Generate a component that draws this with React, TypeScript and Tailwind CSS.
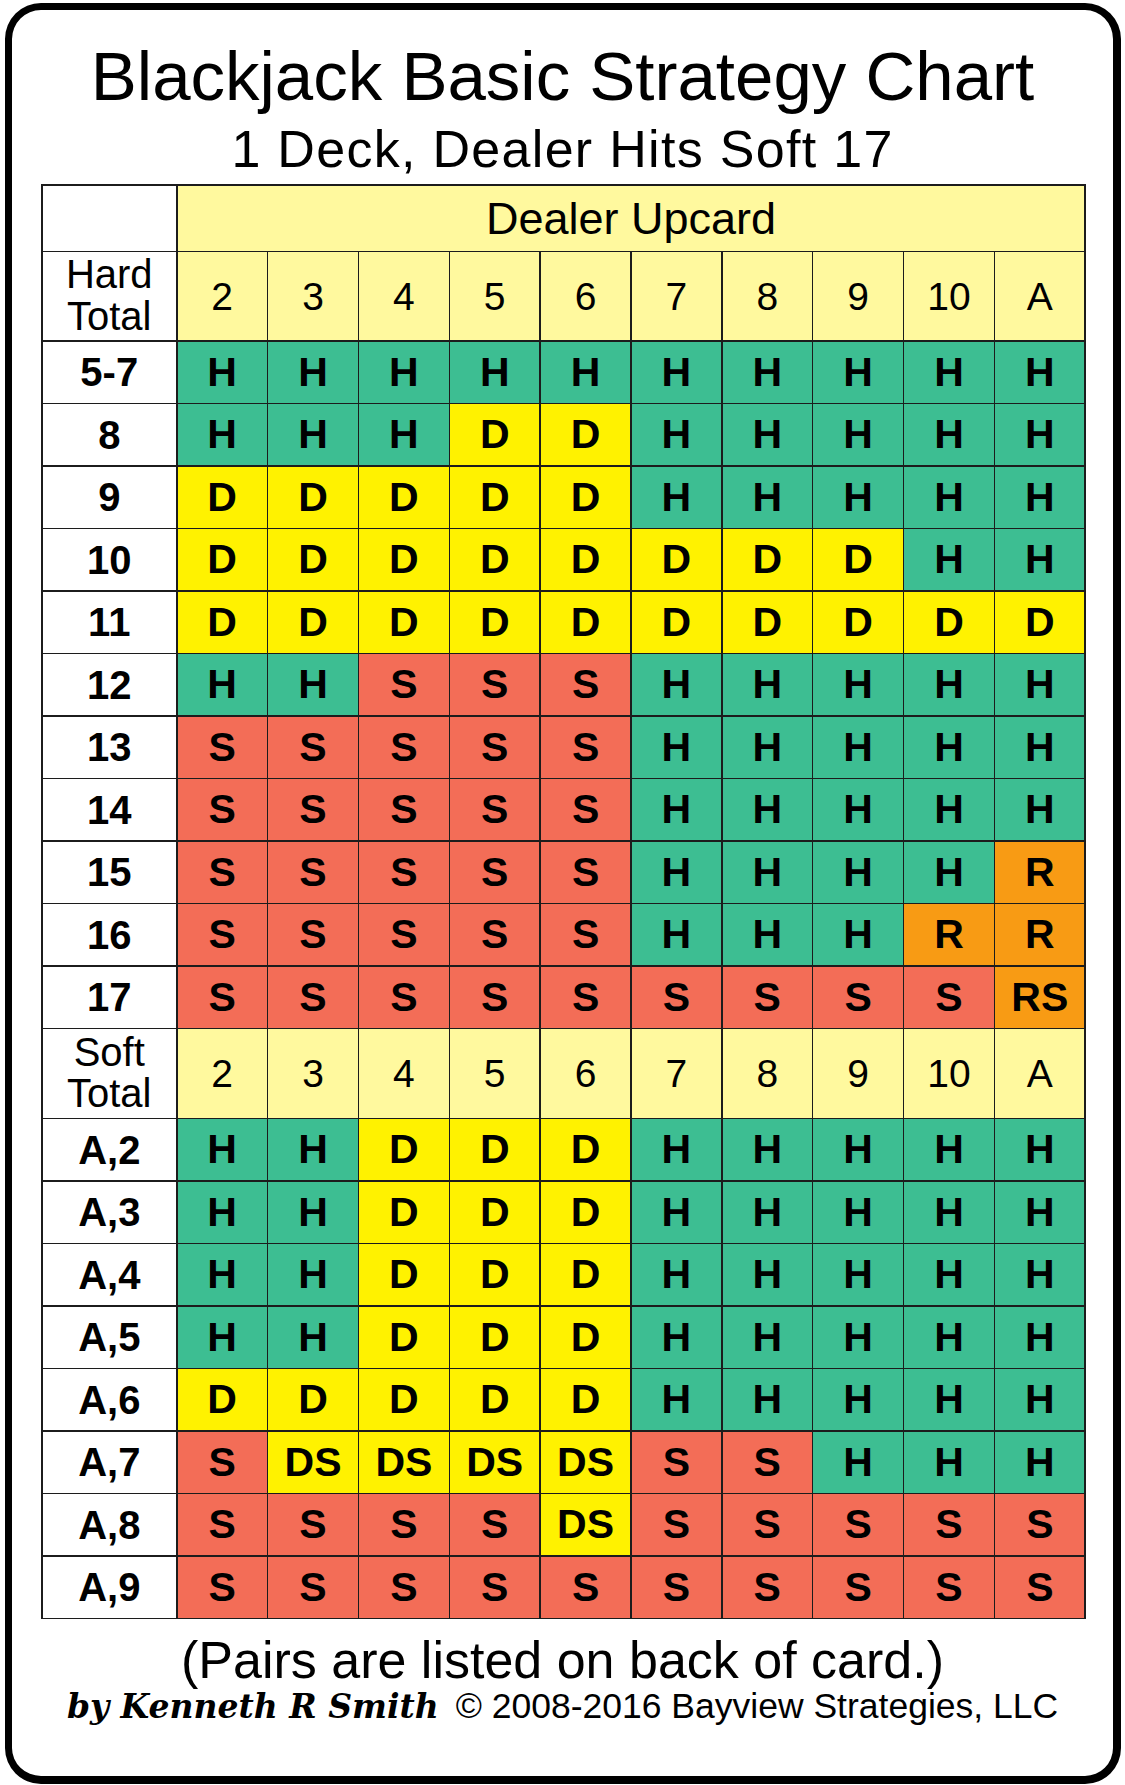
import React from "react";

type Cell = "H" | "D" | "S" | "R" | "DS" | "RS";

const hard: [string, Cell[]][] = [
  ["5-7", ["H", "H", "H", "H", "H", "H", "H", "H", "H", "H"]],
  ["8", ["H", "H", "H", "D", "D", "H", "H", "H", "H", "H"]],
  ["9", ["D", "D", "D", "D", "D", "H", "H", "H", "H", "H"]],
  ["10", ["D", "D", "D", "D", "D", "D", "D", "D", "H", "H"]],
  ["11", ["D", "D", "D", "D", "D", "D", "D", "D", "D", "D"]],
  ["12", ["H", "H", "S", "S", "S", "H", "H", "H", "H", "H"]],
  ["13", ["S", "S", "S", "S", "S", "H", "H", "H", "H", "H"]],
  ["14", ["S", "S", "S", "S", "S", "H", "H", "H", "H", "H"]],
  ["15", ["S", "S", "S", "S", "S", "H", "H", "H", "H", "R"]],
  ["16", ["S", "S", "S", "S", "S", "H", "H", "H", "R", "R"]],
  ["17", ["S", "S", "S", "S", "S", "S", "S", "S", "S", "RS"]],
];

const soft: [string, Cell[]][] = [
  ["A,2", ["H", "H", "D", "D", "D", "H", "H", "H", "H", "H"]],
  ["A,3", ["H", "H", "D", "D", "D", "H", "H", "H", "H", "H"]],
  ["A,4", ["H", "H", "D", "D", "D", "H", "H", "H", "H", "H"]],
  ["A,5", ["H", "H", "D", "D", "D", "H", "H", "H", "H", "H"]],
  ["A,6", ["D", "D", "D", "D", "D", "H", "H", "H", "H", "H"]],
  ["A,7", ["S", "DS", "DS", "DS", "DS", "S", "S", "H", "H", "H"]],
  ["A,8", ["S", "S", "S", "S", "DS", "S", "S", "S", "S", "S"]],
  ["A,9", ["S", "S", "S", "S", "S", "S", "S", "S", "S", "S"]],
];

const upcards = ["2", "3", "4", "5", "6", "7", "8", "9", "10", "A"];

function cellBg(c: Cell): string {
  switch (c) {
    case "H":
      return "bg-[#3dbe92]";
    case "D":
    case "DS":
      return "bg-[#fff200]";
    case "S":
      return "bg-[#f36d57]";
    default:
      return "bg-[#f89b14]";
  }
}

function HeaderRow({ label }: { label: string }) {
  return (
    <>
      <div className="bg-white flex flex-col items-center justify-center text-[40px] leading-[41.7px] text-black">
        <span>{label}</span>
        <span>Total</span>
      </div>
      {upcards.map((u) => (
        <div
          key={label + u}
          className="bg-[#fff99e] flex items-center justify-center text-[39px] leading-none text-black"
        >
          {u}
        </div>
      ))}
    </>
  );
}

function DataRows({ rows }: { rows: [string, Cell[]][] }) {
  return (
    <>
      {rows.map(([label, cells]) => (
        <React.Fragment key={label}>
          <div className="bg-white flex items-center justify-center font-bold text-[40px] leading-none text-black">
            {label}
          </div>
          {cells.map((c, i) => (
            <div
              key={label + "-" + i}
              className={
                cellBg(c) +
                " flex items-center justify-center font-bold text-[41px] leading-none text-black"
              }
            >
              {c}
            </div>
          ))}
        </React.Fragment>
      ))}
    </>
  );
}

export default function App() {
  return (
    <div className="w-[1125px] h-[1785px] bg-white overflow-hidden font-['Liberation_Sans',Arial,sans-serif] text-black">
      <div className="ml-[5px] mt-[3px] w-[1116px] h-[1781px] border-[7px] border-r-[8px] border-b-[8px] border-black rounded-[36px] bg-white flex flex-col">
        <div className="pt-[32px] flex flex-col items-center">
          <h1 className="text-[69px] leading-[69px] font-normal whitespace-nowrap">
            Blackjack Basic Strategy Chart
          </h1>
          <h2 className="mt-[12px] text-[52px] leading-[52px] tracking-[1.3px] font-normal whitespace-nowrap">
            1 Deck, Dealer Hits Soft 17
          </h2>
        </div>

        <div className="mt-[9px] ml-[29px] w-[1045px] bg-[#1c1c1c] p-[1.5px] gap-[1.5px] grid grid-cols-[133.5px_repeat(10,1fr)] grid-rows-[65px_88px_repeat(11,61px)_88.5px_repeat(8,61px)]">
          <div className="bg-white" />
          <div className="col-span-10 bg-[#fff99e] flex items-center justify-center text-[45px] leading-none">
            Dealer Upcard
          </div>
          <HeaderRow label="Hard" />
          <DataRows rows={hard} />
          <HeaderRow label="Soft" />
          <DataRows rows={soft} />
        </div>

        <div className="mt-[15px] flex flex-col items-center">
          <p className="text-[52px] leading-[52px] whitespace-nowrap">
            (Pairs are listed on back of card.)
          </p>
          <p className="mt-[3px] flex items-baseline whitespace-nowrap leading-[34px]">
            <span className="font-['DejaVu_Serif',serif] font-bold italic text-[33px]">
              by Kenneth R Smith
            </span>
            <span className="ml-[17px] text-[35.5px]">© 2008-2016 Bayview Strategies, LLC</span>
          </p>
        </div>
      </div>
    </div>
  );
}
